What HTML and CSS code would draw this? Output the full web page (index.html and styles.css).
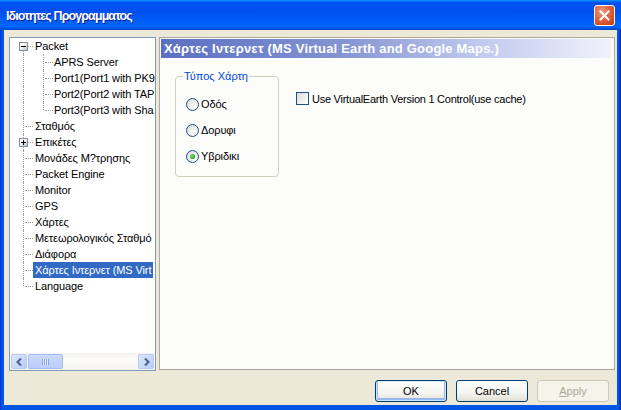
FILE: index.html
```html
<!DOCTYPE html>
<html>
<head>
<meta charset="utf-8">
<link rel="stylesheet" href="styles.css">
</head>
<body>
<div class="window">
  <div class="titlebar">
    <span class="title">Ιδιοτητες Προγραμματος</span>
    <span class="close">
      <svg width="11" height="11" viewBox="0 0 11 11"><path d="M1.5 1.5 L9.5 9.5 M9.5 1.5 L1.5 9.5" stroke="#fff" stroke-width="2" stroke-linecap="square"/></svg>
    </span>
  </div>
  <div class="client">
    <div class="main">
      <div class="tree">
        <div class="tree-body">
          <div class="row root first"><span class="exp minus"></span><span class="lbl">Packet</span></div>
          <div class="row child"><i class="cv"></i><span class="lbl">APRS Server</span></div>
          <div class="row child"><i class="cv"></i><span class="lbl">Port1(Port1 with PK9</span></div>
          <div class="row child"><i class="cv"></i><span class="lbl">Port2(Port2 with TAP</span></div>
          <div class="row child lastchild"><i class="cv"></i><span class="lbl">Port3(Port3 with Sha</span></div>
          <div class="row root"><span class="lbl">Σταθμός</span></div>
          <div class="row root"><span class="exp plus"></span><span class="lbl">Επικέτες</span></div>
          <div class="row root"><span class="lbl">Μονάδες Μ?τρησης</span></div>
          <div class="row root"><span class="lbl">Packet Engine</span></div>
          <div class="row root"><span class="lbl">Monitor</span></div>
          <div class="row root"><span class="lbl">GPS</span></div>
          <div class="row root"><span class="lbl">Χάρτες</span></div>
          <div class="row root"><span class="lbl">Μετεωρολογικός Σταθμό</span></div>
          <div class="row root"><span class="lbl">Διάφορα</span></div>
          <div class="row root"><span class="lbl sel">Χάρτες Ιντερνετ (MS Virt</span></div>
          <div class="row root last"><span class="lbl">Language</span></div>
        </div>
        <div class="hscroll">
          <span class="sbtn"><svg width="7" height="8" viewBox="0 0 7 8"><path d="M5 0.5 L1.5 4 L5 7.5" fill="none" stroke="#4D6185" stroke-width="2"/></svg></span>
          <span class="thumb"><span class="grip"></span></span>
          <span class="track"></span>
          <span class="sbtn"><svg width="7" height="8" viewBox="0 0 7 8"><path d="M2 0.5 L5.5 4 L2 7.5" fill="none" stroke="#4D6185" stroke-width="2"/></svg></span>
        </div>
      </div>
      <div class="panel">
        <div class="panel-head">Χάρτες Ιντερνετ (MS Virtual Earth and Google Maps.)</div>
        <div class="panel-body">
          <div class="group">
            <span class="group-title">Τύπος Χάρτη</span>
            <div class="opt"><span class="radio"></span><span class="opt-lbl">Οδός</span></div>
            <div class="opt"><span class="radio"></span><span class="opt-lbl">Δορυφι</span></div>
            <div class="opt"><span class="radio on"></span><span class="opt-lbl">Υβριδικι</span></div>
          </div>
          <div class="check"><span class="box"></span><span class="check-lbl">Use VirtualEarth Version 1 Control(use cache)</span></div>
        </div>
      </div>
    </div>
    <div class="buttons">
      <span class="btn default">OK</span>
      <span class="btn">Cancel</span>
      <span class="btn disabled"><u>A</u>pply</span>
    </div>
  </div>
</div>
</body>
</html>
```

FILE: styles.css
```css
* { box-sizing: border-box; }
html, body { margin: 0; padding: 0; }
body {
  width: 621px; height: 410px; overflow: hidden;
  font-family: "Liberation Sans", Arial, sans-serif;
  font-size: 11px;
  background: #3A6EA5;
}
.window {
  width: 621px; height: 410px;
  display: flex; flex-direction: column;
  background: linear-gradient(to right, #0831D9 0, #0055E5 2px, #0055E5 calc(100% - 2px), #0020A0 100%);
}
.titlebar {
  height: 30px; flex: none;
  display: flex; align-items: center; justify-content: space-between;
  padding: 0 6px 0 6px;
  background: linear-gradient(to bottom, #0997FF 0, #0053EE 8%, #0050EE 40%, #0066FF 88%, #0046C8 100%);
}
.title {
  color: #fff; font-weight: bold; font-size: 12.5px; letter-spacing: -0.9px;
  text-shadow: 1px 1px 0 #0A1E8C;
  padding-top: 1px;
}
.close {
  width: 21px; height: 21px; margin-top: 1px;
  border: 1px solid #fff; border-radius: 3px;
  background: radial-gradient(circle at 35% 30%, #E99B84 0, #E0643F 45%, #C1380F 100%);
  display: flex; align-items: center; justify-content: center;
}
.client {
  flex: 1;
  margin: 0 4px 5px 4px;
  background: #ECE9D8;
  display: flex; flex-direction: column;
}
.main {
  display: flex; gap: 3px;
  padding: 7px 2px 0 5px;
}
.tree {
  width: 147px; height: 334px;
  border: 1px solid #7F9DB9;
  background: #fff;
  display: flex; flex-direction: column;
}
.tree-body { flex: 1; overflow: hidden; padding-right: 2px; }
.row {
  position: relative; height: 16px; line-height: 16px;
  white-space: nowrap; color: #000;
  letter-spacing: -0.1px;
}
.row.root { padding-left: 23px; }
.row.child { padding-left: 42px; }
.row::before {
  content: ""; position: absolute; left: 13px; top: 0; bottom: 0;
  border-left: 1px dotted #A0A0A0;
}
.row.first::before { top: 8px; }
.row.last::before { bottom: 8px; }
.row::after {
  content: ""; position: absolute; top: 8px; width: 8px;
  border-top: 1px dotted #A0A0A0;
}
.row.root::after { left: 15px; }
.row.child::after { left: 35px; }
.cv {
  position: absolute; left: 33px; top: 0; bottom: 0;
  border-left: 1px dotted #A0A0A0;
}
.lastchild .cv { bottom: 8px; }
.lbl { display: inline-block; padding: 0 2px; height: 16px; }
.lbl.sel { background: #316AC5; color: #fff; }
.exp {
  position: absolute; z-index: 1; left: 9px; top: 4px; width: 9px; height: 9px;
  border: 1px solid #7B90A6;
  background: linear-gradient(135deg, #fff 30%, #C6C2B2 100%);
}
.exp::before {
  content: ""; position: absolute; left: 1px; top: 3px; width: 5px; height: 1px; background: #000;
}
.exp.plus::after {
  content: ""; position: absolute; left: 3px; top: 1px; width: 1px; height: 5px; background: #000;
}
.hscroll {
  height: 17px; flex: none;
  display: flex; align-items: center;
  padding: 0 1px;
  background: linear-gradient(to bottom, #F3F1EA, #FEFEFB 40%, #F3F1EA);
}
.sbtn {
  width: 16px; height: 15px; flex: none;
  border: 1px solid #B8CAF2; border-radius: 2px;
  background: linear-gradient(135deg, #DCE6FD, #B9CCFA);
  display: flex; align-items: center; justify-content: center;
}
.thumb {
  width: 35px; height: 15px; flex: none; margin-left: 1px;
  border: 1px solid #A4BCF2; border-radius: 2px;
  background: linear-gradient(to bottom, #CBDAFD, #BACDF9);
  display: flex; align-items: center; justify-content: center;
}
.grip {
  width: 7px; height: 6px;
  background: repeating-linear-gradient(to right, #8AA2E0 0 1px, #E6EDFD 1px 2px);
}
.track { flex: 1; }
.panel {
  width: 456px; height: 333px;
  border: 1px solid #ACA899;
  background: #FCFCFB;
  padding: 1px 3px 0 1px;
}
.panel-head {
  height: 19px; line-height: 19px;
  padding-left: 3px;
  color: #fff; font-weight: bold; font-size: 13px; letter-spacing: 0.2px;
  background: linear-gradient(to right, #5A70C2 0%, #8494D2 40%, #C3CBEE 72%, #F0F2FB 100%);
}
.panel-body {
  display: flex; align-items: flex-start;
  padding: 18px 0 0 14px;
}
.group {
  position: relative;
  width: 104px; height: 101px;
  border: 1px solid #D0D0BF; border-radius: 4px;
  padding-top: 14px; padding-left: 10px;
}
.group-title {
  position: absolute; left: 7px; top: -8px;
  padding: 0 1px; background: #FCFCFB;
  color: #0046D5; line-height: 14px;
  letter-spacing: 0;
}
.opt { display: flex; align-items: center; height: 26px; width: 72px; overflow: hidden; white-space: nowrap; }
.radio {
  width: 13px; height: 13px; flex: none; border-radius: 50%;
  border: 1px solid #1C5180;
  background: radial-gradient(circle at 70% 70%, #fff 0, #F0EFEA 40%, #D4D3CC 100%);
  display: flex; align-items: center; justify-content: center;
}
.radio.on::after {
  content: ""; width: 5px; height: 5px; border-radius: 50%;
  background: radial-gradient(circle at 40% 40%, #7FE07F, #21A121 70%);
}
.opt-lbl { margin-left: 2px; letter-spacing: -0.1px; }
.check {
  display: flex; align-items: center;
  margin-left: 17px; margin-top: 16px;
}
.box {
  width: 13px; height: 13px; flex: none;
  border: 1px solid #1C5180;
  background: linear-gradient(135deg, #DCDCD7, #fff);
}
.check-lbl { margin-left: 3px; letter-spacing: -0.25px; }
.buttons {
  display: flex; justify-content: flex-end; gap: 9px;
  padding: 0 8px 0 0; margin-top: 9px;
}
.btn {
  width: 72px; height: 22px; line-height: 20px; text-align: center;
  border: 1px solid #003C74; border-radius: 3px;
  background: linear-gradient(to bottom, #FFFFFF 0%, #F4F4F0 60%, #E3E0D5 100%);
  color: #000;
}
.btn.default {
  box-shadow: inset 0 0 0 1px #CEE7FF, inset 0 -1px 0 2px #98B8F0;
}
.btn.disabled {
  border-color: #C9C7BA; color: #ACA899;
  background: #F5F4EA;
}
```
